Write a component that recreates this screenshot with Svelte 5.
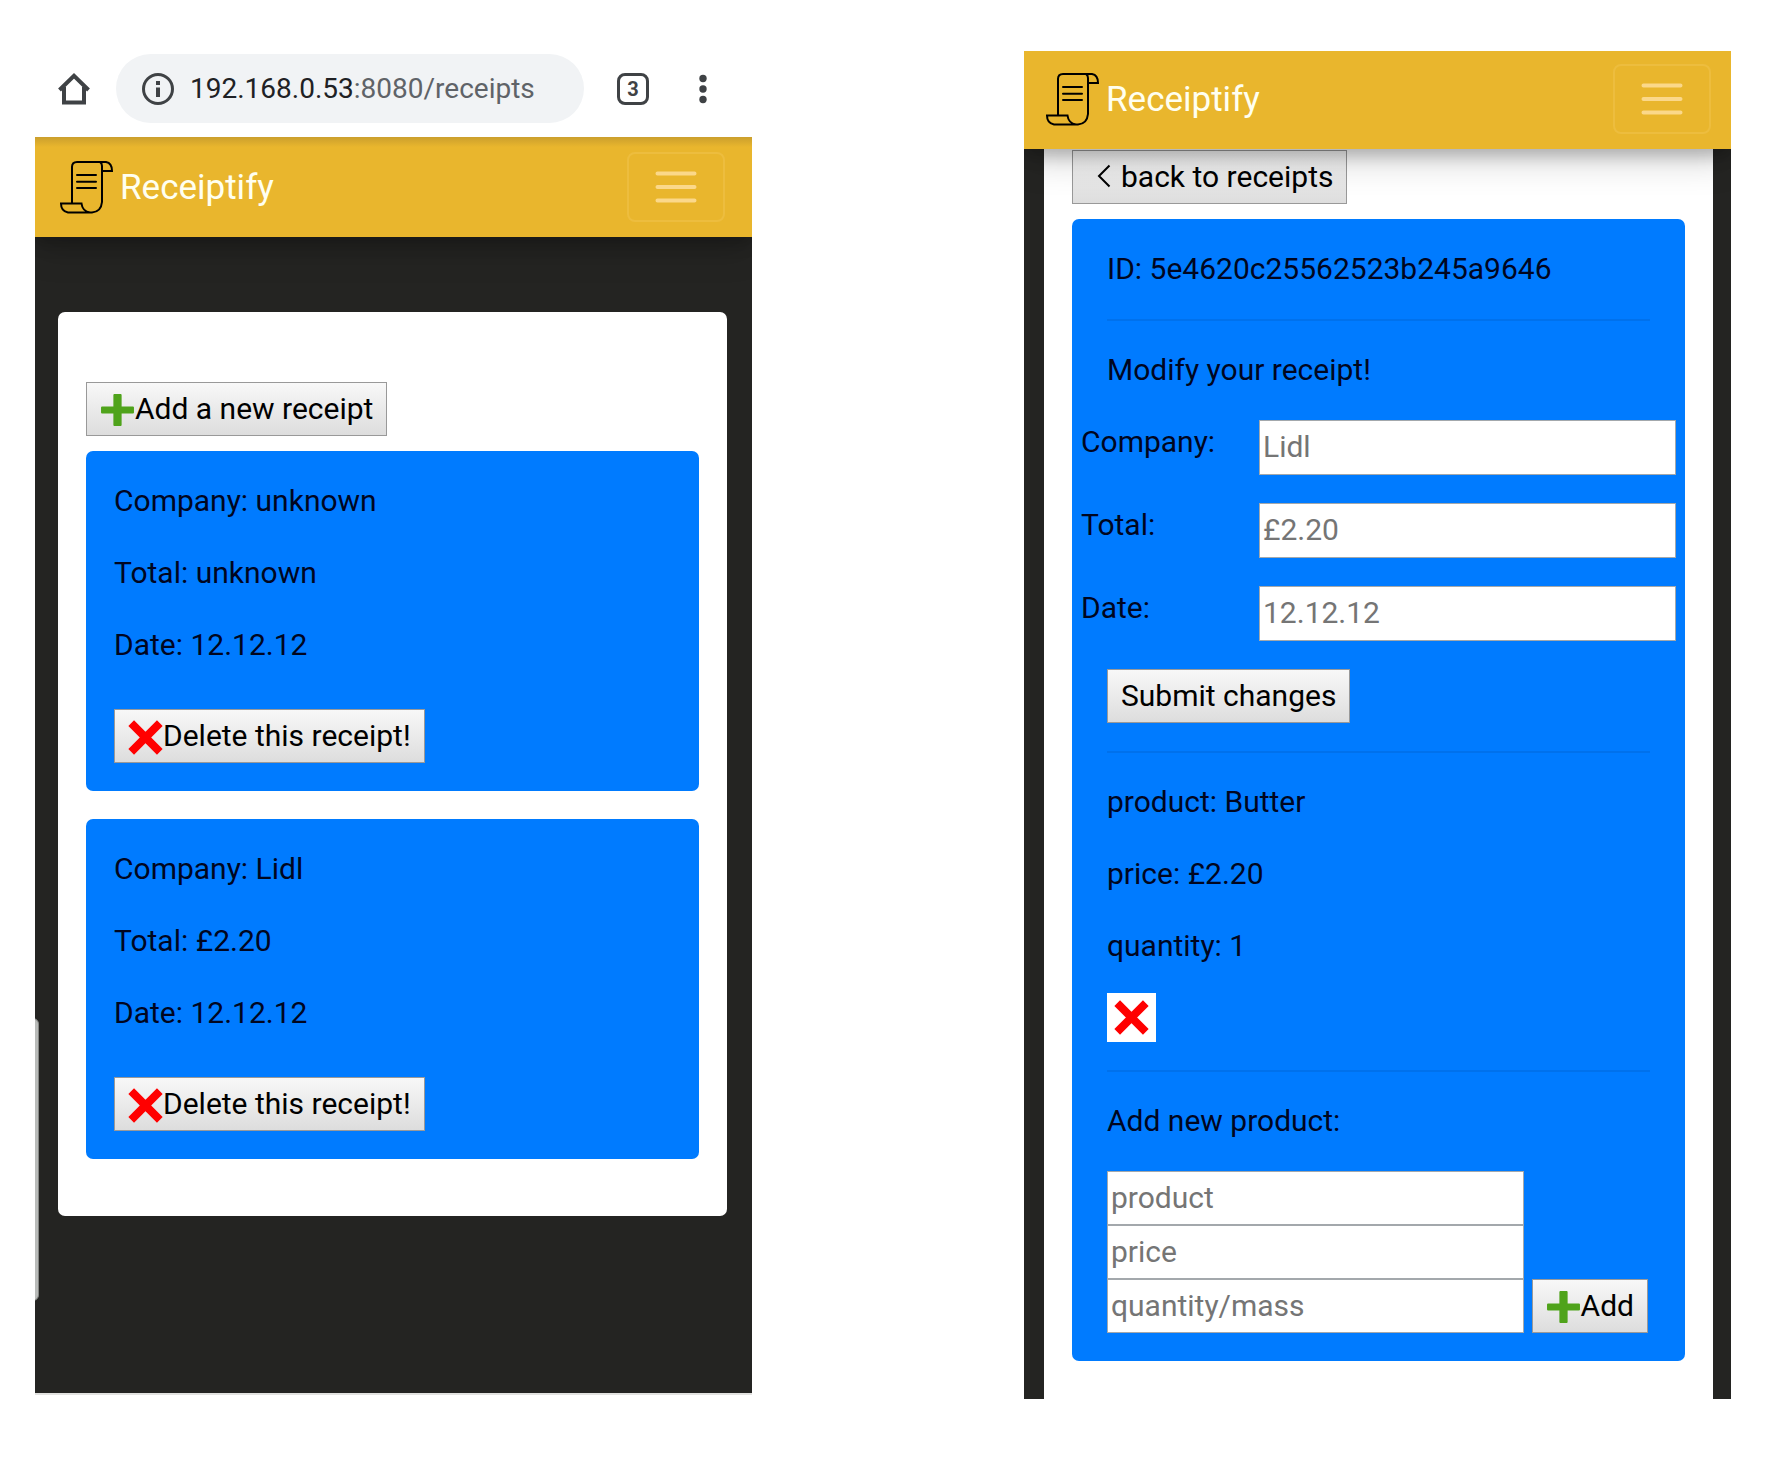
<script>
  const receipts = [
    { company: 'unknown', total: 'unknown', date: '12.12.12' },
    { company: 'Lidl', total: '£2.20', date: '12.12.12' }
  ];
  const fields = [
    { id: 'company', label: 'Company:', hint: 'Lidl' },
    { id: 'total', label: 'Total:', hint: '£2.20' },
    { id: 'date', label: 'Date:', hint: '12.12.12' }
  ];
  const newFields = ['product', 'price', 'quantity/mass'];
</script>

{#snippet plus()}
  <svg class="mark" viewBox="0 0 34 34" aria-hidden="true">
    <path d="M14 1h6a1 1 0 0 1 1 1v11h11a1 1 0 0 1 1 1v5a1 1 0 0 1-1 1H21v11a1 1 0 0 1-1 1h-6a1 1 0 0 1-1-1V20H2a1 1 0 0 1-1-1v-5a1 1 0 0 1 1-1h11V2a1 1 0 0 1 1-1z" fill="#4fa31b" />
  </svg>
{/snippet}

{#snippet cross()}
  <svg class="mark" viewBox="0 0 35 35" aria-hidden="true">
    <path d="M3.200 3.200 31.800 31.800M31.800 3.200 3.200 31.800" stroke="#f00" stroke-width="8" />
  </svg>
{/snippet}

{#snippet navbar()}
  <header class="navbar">
    <a class="brand" href="#home">
      <svg class="logo" viewBox="0 0 53 53" fill="none" stroke="#000" stroke-width="2" aria-hidden="true">
        <path d="M12 42V6q0-5 5-5h29q6 1 6 9H41.500" />
        <path d="M40 1q2 1 2 4v36q-1 10-10 10.500H8Q1 50 1 42.500h20.500q1 8 8.500 9" />
        <path d="M17 14h19M17 20.700h19M17 27h19" stroke-linecap="round" />
      </svg>
      <span>Receiptify</span>
    </a>
    <button class="toggler" aria-label="Toggle navigation">
      <svg viewBox="0 0 54 54" aria-hidden="true">
        <path d="M8.500 13.500h37M8.500 27h37M8.500 40.500h37" stroke="#fbd88a" stroke-width="4" stroke-linecap="round" />
      </svg>
    </button>
  </header>
{/snippet}

<main>
  <section class="phone list">
    <div class="browser">
      <button class="plain" aria-label="Home">
        <svg width="32" height="32" viewBox="0 0 32 32" fill="none" stroke="#3f4245" stroke-width="4" aria-hidden="true">
          <path d="M1.500 17 16 2.800 30.500 17M6 14v15.500h20V14" />
        </svg>
      </button>
      <div class="address">
        <svg width="32" height="32" viewBox="0 0 32 32" fill="none" stroke="#3f4245" aria-hidden="true">
          <circle cx="16" cy="16" r="14.500" stroke-width="3" />
          <path d="M16 8v4M16 14.500v9.500" stroke-width="4" />
        </svg>
        <span class="url"><b>192.168.0.53</b>:8080/receipts</span>
      </div>
      <button class="tabs">3</button>
      <button class="plain" aria-label="More">
        <svg width="8" height="32" viewBox="0 0 8 32" fill="#3f4245" aria-hidden="true">
          <circle cx="4" cy="5.500" r="3.700" /><circle cx="4" cy="16" r="3.700" /><circle cx="4" cy="26.500" r="3.700" />
        </svg>
      </button>
    </div>
    <div class="screen">
      {@render navbar()}
      <div class="panel">
        <button class="btn">{@render plus()}Add a new receipt</button>
        {#each receipts as r}
          <article class="card">
            <p>Company: {r.company}</p>
            <p>Total: {r.total}</p>
            <p>Date: {r.date}</p>
            <button class="btn">{@render cross()}Delete this receipt!</button>
          </article>
        {/each}
      </div>
      <div class="edge"></div>
    </div>
  </section>

  <section class="phone detail">
    {@render navbar()}
    <div class="panel">
      <button class="btn back">
        <svg width="14" height="24" viewBox="0 0 14 24" fill="none" stroke="#000" stroke-width="2" aria-hidden="true">
          <path d="M12.500 1.500 2 12l10.500 10.500" />
        </svg>
        back to receipts
      </button>
      <article class="card">
        <p>ID: 5e4620c25562523b245a9646</p>
        <hr />
        <p>Modify your receipt!</p>
        <form class="edit">
          {#each fields as f}
            <div class="row">
              <label for={f.id}>{f.label}</label>
              <input id={f.id} type="text" placeholder={f.hint} />
            </div>
          {/each}
          <button class="btn" type="button">Submit changes</button>
        </form>
        <hr />
        <p>product: Butter</p>
        <p>price: £2.20</p>
        <p>quantity: 1</p>
        <button class="remove" aria-label="Delete product">{@render cross()}</button>
        <hr />
        <p>Add new product:</p>
        <form class="add">
          <div class="stack">
            {#each newFields as name}
              <input type="text" placeholder={name} aria-label={name} />
            {/each}
          </div>
          <button class="btn" type="button">{@render plus()}Add</button>
        </form>
      </article>
    </div>
  </section>
</main>

<style>
  :global(body) { background: #fff; }
  main, main :global(*) { box-sizing: border-box; }
  main {
    display: grid;
    grid-template-columns: 717fr 707fr;
    gap: 272px;
    align-items: start;
    padding: 51px 53px 72px 35px;
    font: 30px/43px Roboto, sans-serif;
    color: #00061f;
  }
  button, input { font: inherit; border-radius: 0; margin: 0; }
  svg { display: block; flex: none; }
  p { margin: 0 0 29px; }

  .browser {
    display: flex;
    align-items: center;
    height: 86px;
    padding: 3px 45px 14px 23px;
  }
  .plain { padding: 0; border: 0; background: none; }
  .address {
    display: flex;
    flex: 1;
    align-items: center;
    gap: 16px;
    height: 69px;
    margin: 0 33px 0 26px;
    padding-left: 26px;
    border-radius: 35px;
    background: #f1f3f5;
  }
  .url { font-size: 28px; color: #5f6368; white-space: nowrap; }
  .url b { font-weight: 400; color: #202124; }
  .tabs {
    width: 32px;
    height: 32px;
    margin-right: 50px;
    padding: 0;
    border: 3px solid #3f4245;
    border-radius: 8px;
    background: none;
    color: #3f4245;
    font-size: 20px;
    line-height: 26px;
    font-weight: 700;
  }

  .navbar {
    position: relative;
    display: flex;
    align-items: center;
    justify-content: space-between;
    background: #e9b62d;
    box-shadow: 0 7px 14px rgba(0, 0, 0, .2), 0 11px 36px rgba(0, 0, 0, .19);
  }
  .list .navbar {
    height: 100px;
    padding: 0 27px 0 25px;
    background: linear-gradient(#cb9f2d, #e9b62d 10px);
  }
  .detail .navbar { height: 98px; padding: 0 20px 2px 22px; }
  .brand {
    display: flex;
    align-items: center;
    gap: 7px;
    color: #fffff0;
    font-size: 35px;
    text-decoration: none;
  }
  .logo { width: 53px; height: 53px; }
  .toggler {
    display: flex;
    align-items: center;
    justify-content: center;
    width: 98px;
    height: 70px;
    padding: 0;
    border: 2px solid #edbd3e;
    border-radius: 8px;
    background: none;
  }
  .toggler svg { width: 54px; height: 54px; }

  .screen {
    position: relative;
    overflow: hidden;
    padding-bottom: 177px;
    border-bottom: 2px solid #e2e2e0;
    background: #242422;
  }
  .list .panel {
    margin: 75px 25px 0 23px;
    padding: 70px 28px 57px;
    border-radius: 7px;
    background: #fff;
  }
  .edge {
    position: absolute;
    left: -8px;
    top: 881px;
    width: 12px;
    height: 283px;
    border-radius: 8px;
    background: #b9bbb9;
    border: 1px solid #858784;
  }

  .card { border-radius: 7px; background: #007bff; }
  .list .card { margin-top: 15px; padding: 28px; }
  .list .card + .card { margin-top: 28px; }
  .list .card .btn { margin-top: 14px; }
  .list .card p:last-of-type { margin-bottom: 0; padding-bottom: 29px; }

  .btn {
    display: flex;
    align-items: center;
    height: 54px;
    padding: 0 13px 2px;
    border: 1px solid #999;
    background: linear-gradient(#f8f8f8, #ddd);
    color: #000;
    white-space: nowrap;
  }
  .mark { width: 35px; height: 35px; }
  .btn .mark { margin-top: 4px; }

  .detail { overflow: hidden; background: #242422; }
  .detail .panel {
    margin: 0 18px 0 20px;
    padding: 1px 28px 38px;
    background: #fff;
  }
  .back { gap: 10px; padding-left: 24px; }
  .detail .card { margin-top: 15px; padding: 28px 35px; }
  hr { margin: 28px 0 27px; border: 0; border-top: 2px solid #0071ec; }
  .edit { margin-bottom: 28px; }
  .row { display: flex; margin: 0 -26px 28px; }
  .row label { width: 178px; }
  .row input { flex: 1; min-width: 0; }
  input {
    display: block;
    height: 55px;
    padding: 0 3px 2px;
    border: 1px solid #a3a8ac;
    background: #fff;
    color: #000;
  }
  input::placeholder { color: #757575; opacity: 1; }
  .remove { display: block; margin-top: -3px; padding: 7px; border: 0; background: #fff; }
  .add { display: flex; align-items: flex-end; gap: 8px; padding-right: 2px; }
  .stack { flex: 1; }
  .stack input { width: 100%; height: 54px; }
</style>
